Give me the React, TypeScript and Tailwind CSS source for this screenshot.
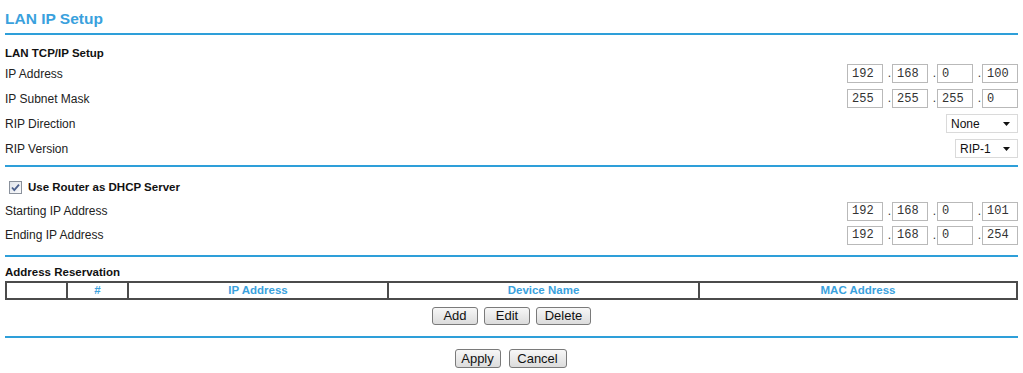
import React from "react"

const sans = "font-['Liberation_Sans',Arial,sans-serif]"

function IpBoxes({ parts }: { parts: string[] }) {
  return (
    <div className="flex items-center">
      {parts.map((p, i) => (
        <React.Fragment key={i}>
          {i > 0 && (
            <span className="w-[9px] text-right pr-[1px] text-[12px] leading-[19px] text-[#333]">.</span>
          )}
          <div className="w-[36px] h-[19px] border border-[#b9b9b9] bg-white pl-[4px] flex items-center font-['Liberation_Mono','Courier_New',monospace] text-[12px] text-[#333]">
            {p}
          </div>
        </React.Fragment>
      ))}
    </div>
  )
}

function Select({ value, width }: { value: string; width: string }) {
  return (
    <div
      className={`${width} h-[19px] border border-[#dadada] bg-white pl-[4px] pr-[7px] flex items-center justify-between text-[12px] text-[#111]`}
    >
      <span>{value}</span>
      <svg width="7" height="4" viewBox="0 0 7 4">
        <path d="M0 0 H7 L3.5 4 Z" fill="#111" />
      </svg>
    </div>
  )
}

function Btn({ label, width }: { label: string; width: string }) {
  return (
    <div
      className={`${width} h-full border border-[#7a7a7a] rounded-[3px] bg-linear-to-b from-[#f7f7f7] to-[#dcdcdc] flex items-center justify-center text-[13px] text-[#111]`}
    >
      {label}
    </div>
  )
}

function Row({ label, h = "h-[25px]", children }: { label: string; h?: string; children?: React.ReactNode }) {
  return (
    <div className={`${h} flex items-center justify-between`}>
      <span className="text-[12px] text-[#222]">{label}</span>
      {children}
    </div>
  )
}

const Line = ({ className = "" }: { className?: string }) => (
  <div className={`h-[2px] bg-[#2e9fd9] ${className}`} />
)

export default function App() {
  return (
    <div className={`${sans} w-[1023px] h-[373px] bg-white px-[5px] overflow-hidden`}>
      {/* Page title */}
      <div className="pt-[10px] h-[33px]">
        <h1 className="text-[15.5px] leading-[18px] font-bold text-[#3aa1dd]">LAN IP Setup</h1>
      </div>
      <Line />

      {/* LAN TCP/IP */}
      <div className="h-[26px] pt-[11px]">
        <span className="text-[11.5px] leading-[14px] font-bold text-[#111] block">LAN TCP/IP Setup</span>
      </div>
      <Row label="IP Address">
        <IpBoxes parts={["192", "168", "0", "100"]} />
      </Row>
      <Row label="IP Subnet Mask">
        <IpBoxes parts={["255", "255", "255", "0"]} />
      </Row>
      <Row label="RIP Direction">
        <Select value="None" width="w-[72px]" />
      </Row>
      <Row label="RIP Version">
        <Select value="RIP-1" width="w-[63px]" />
      </Row>
      <Line className="mt-[4px]" />

      {/* DHCP */}
      <div className="h-[24px] mt-[8px] flex items-center pl-[4px] gap-[6px]">
        <svg width="13" height="13" viewBox="0 0 13 13">
          <defs>
            <linearGradient id="cb" x1="0" y1="0" x2="1" y2="1">
              <stop offset="0" stopColor="#dfe3ea" />
              <stop offset="1" stopColor="#fbfbfc" />
            </linearGradient>
          </defs>
          <rect x="0.5" y="0.5" width="12" height="12" fill="url(#cb)" stroke="#8a919c" />
          <path d="M3 6.5 L5.3 9.2 L10 3.6" fill="none" stroke="#4b5f8c" strokeWidth="1.8" />
        </svg>
        <span className="text-[11.5px] leading-[14px] font-bold text-[#111]">Use Router as DHCP Server</span>
      </div>
      <Row label="Starting IP Address" h="h-[24px]">
        <IpBoxes parts={["192", "168", "0", "101"]} />
      </Row>
      <Row label="Ending IP Address" h="h-[24px]">
        <IpBoxes parts={["192", "168", "0", "254"]} />
      </Row>
      <Line className="mt-[8px]" />

      {/* Address Reservation */}
      <div className="h-[24px] pt-[8px]">
        <span className="text-[11.5px] leading-[14px] font-bold text-[#111] block">Address Reservation</span>
      </div>
      <div className="flex h-[19px] border-2 border-[#4b4b4b] text-[11.5px] font-bold text-[#3aa1dd]">
        <div className="w-[59px]" />
        <div className="w-[61px] border-l-2 border-[#4b4b4b] flex items-center justify-center">#</div>
        <div className="w-[260px] border-l-2 border-[#4b4b4b] flex items-center justify-center">IP Address</div>
        <div className="w-[311px] border-l-2 border-[#4b4b4b] flex items-center justify-center">Device Name</div>
        <div className="flex-1 border-l-2 border-[#4b4b4b] flex items-center justify-center">MAC Address</div>
      </div>
      <div className="mt-[7px] h-[18px] flex justify-center gap-[6px]">
        <Btn label="Add" width="w-[46px]" />
        <Btn label="Edit" width="w-[46px]" />
        <Btn label="Delete" width="w-[55px]" />
      </div>
      <Line className="mt-[11px]" />

      <div className="mt-[11px] h-[19px] flex justify-center gap-[8px] pr-[2px]">
        <Btn label="Apply" width="w-[46px]" />
        <Btn label="Cancel" width="w-[58px]" />
      </div>
    </div>
  )
}
